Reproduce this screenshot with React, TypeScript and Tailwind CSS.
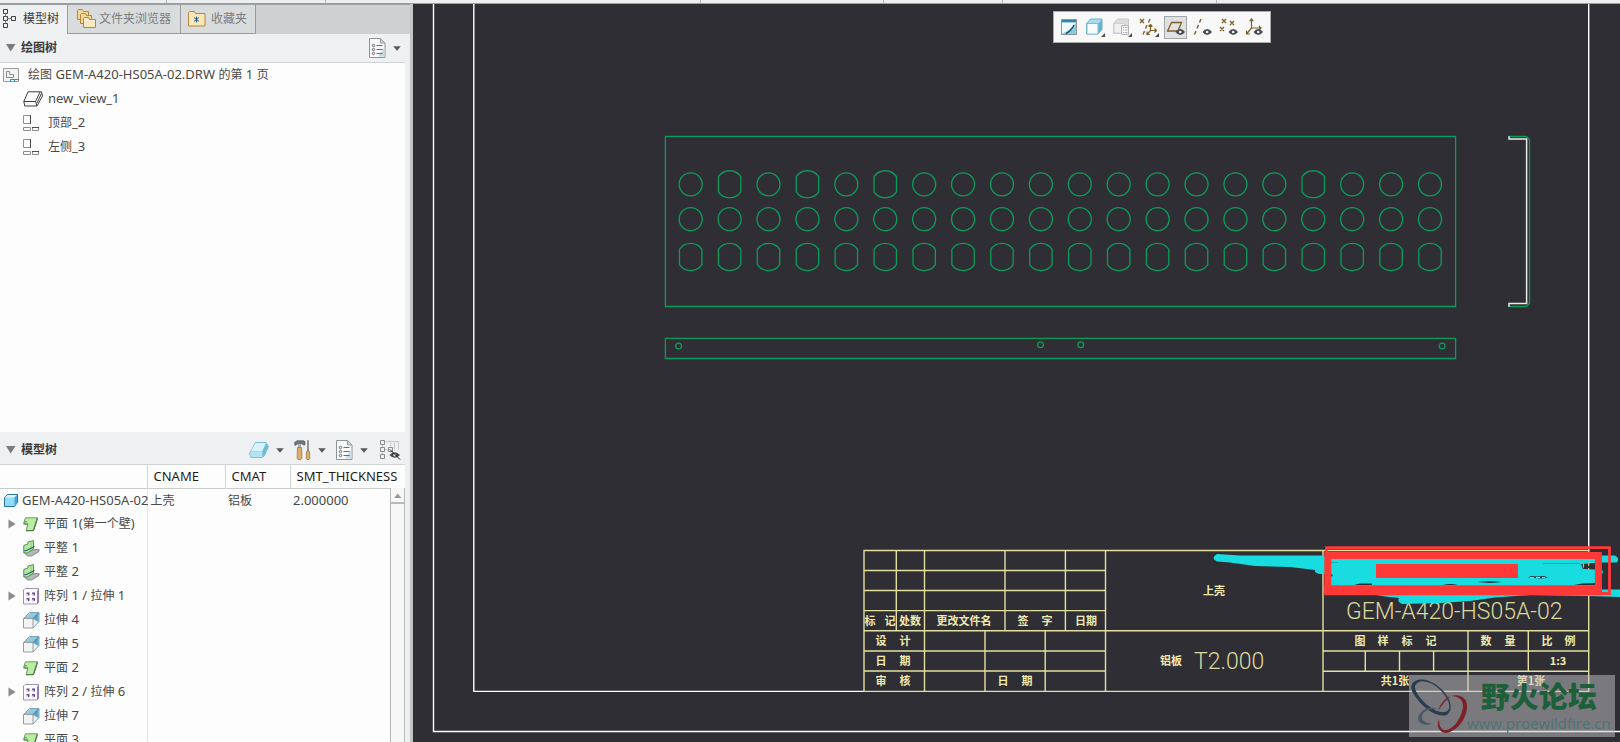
import type { ReactNode } from "react";

/* ---------- text ---------- */

/** Sets ideographs one step smaller than Latin letters and digits. */
function Label({ text }: { text: string }) {
  const runs = text.split(/([\u4e00-\u9fff]+)/).filter(Boolean);
  return (
    <>
      {runs.map((run, i) =>
        /[\u4e00-\u9fff]/.test(run) ? (
          <span key={i} className="text-[12px]">{run}</span>
        ) : (
          <span key={i}>{run}</span>
        ),
      )}
    </>
  );
}

/* ---------- icons ---------- */

function TreeIcon() {
  return (
    <svg width="16" height="20" viewBox="0 0 16 20" fill="none" stroke="#3f3f3f" aria-hidden="true">
      <path d="M.5.5h4v4h-4zM.5 7.500h4v4h-4zM.5 14.500h4v4h-4zM8.500 7.500h4v4h-4z" />
      <path d="M2.500 4.500v3M2.500 11.500v3M4.500 9.500h4" stroke="#777" />
    </svg>
  );
}

function FoldersIcon() {
  return (
    <svg width="20" height="20" viewBox="0 0 20 20" aria-hidden="true">
      <g fill="#f6d79a" stroke="#b5843c">
        <path d="M1.500 10.500V1.500l1-1h4l1 2h5v8z" />
        <path d="M4.500 14.500V5.500l1-1h4l1 2h5v8z" />
        <path d="M7.500 18.500V9.500l1-1h4l1 2h6v8z" fill="#fbe8bd" />
      </g>
      <path d="M8.500 11.500h10" stroke="#fff6de" />
    </svg>
  );
}

function FavoritesIcon() {
  return (
    <svg width="18" height="16" viewBox="0 0 18 16" aria-hidden="true">
      <path d="M.5 15V1.500l1-1h5l1 2h9.500V15z" fill="#fbe6b9" stroke="#b5843c" />
      <path d="M8.500 5.500v6M6 6.500l5 4M6 10.500l5-4" stroke="#1b5f86" />
    </svg>
  );
}

function DocListIcon() {
  return (
    <svg width="17" height="20" viewBox="0 0 17 20" aria-hidden="true">
      <path d="M.5.5h11l4.500 4.500v14.500H.5z" fill="#f7f9fa" stroke="#8f9496" />
      <path d="M9 18.500h6.500V9z" fill="#c6dbe2" />
      <path d="M11.500.5V5H16z" fill="#cfd3d5" stroke="#9a9fa1" />
      <g fill="none" stroke="#6a6a6a">
        <circle cx="4.500" cy="7.500" r="1.200" />
        <circle cx="4.500" cy="11.500" r="1.200" />
        <circle cx="4.500" cy="15.500" r="1.200" />
        <path d="M7.500 7.500h6M7.500 11.500h6M7.500 15.500h6" />
      </g>
    </svg>
  );
}

function CaretIcon() {
  return (
    <svg width="8" height="5" viewBox="0 0 8 5" aria-hidden="true">
      <path d="M.2.200h7.600L4 4.800z" fill="#585858" />
    </svg>
  );
}

function SectionArrow() {
  return (
    <svg width="10" height="8" viewBox="0 0 10 8" aria-hidden="true">
      <path d="M0 0h9.500L4.700 7.500z" fill="#7c7c7c" />
    </svg>
  );
}

function ExpandArrow() {
  return (
    <svg width="8" height="10" viewBox="0 0 8 10" aria-hidden="true">
      <path d="M.5.5v9L7.500 5z" fill="#8a8a8a" />
    </svg>
  );
}

function SheetIcon() {
  return (
    <svg width="17" height="15" viewBox="0 0 17 15" aria-hidden="true">
      <path d="M.5.5h15v13H.5z" fill="#f2f4f5" stroke="#9b9b9b" />
      <path d="M3.500 3.500h3v3h4v3h-7z" fill="none" stroke="#8b8b8b" />
      <path d="M7.500 14v-2.500h8.500M11.500 12v2" fill="none" stroke="#2f8fc4" />
    </svg>
  );
}

function View3dIcon() {
  return (
    <svg width="20" height="16" viewBox="0 0 20 16" fill="none" stroke="#3d3d3d" aria-hidden="true">
      <path d="M.8 10.500L5 .8h13.500l1 4.200-5.500 10H1.800z" strokeLinejoin="round" />
      <path d="M.8 10.500h11.700L17 1M12.500 10.500L14 15M14 12l4.500-9.500" />
    </svg>
  );
}

function ProjectionIcon() {
  return (
    <svg width="17" height="17" viewBox="0 0 17 17" fill="none" aria-hidden="true">
      <path d="M7.500.5h-7v8h7M.5 12.500h7v3h-7zM9.500 12.500v3h6v-3" stroke="#8f8f8f" />
      <path d="M7.500 0v9M9 12.500h7" stroke="#4a4a4a" />
    </svg>
  );
}

function SlabIcon() {
  return (
    <svg width="20" height="16" viewBox="0 0 20 16" aria-hidden="true">
      <path d="M6.500.5h10.500l2.500 4-4 9-2 2H2L.5 11.500z" fill="#8ed3ec" stroke="#7dbcd3" strokeLinejoin="round" />
      <path d="M6.500 1h10.500l-3.500 8H2z" fill="#d8f3fb" />
      <path d="M1.500 9.500h11.500l1 5.500H2.500L1 12z" fill="#b4e4f4" />
      <path d="M13.500 9L17 1.500l2 3-3.500 8.500-2 2z" fill="#6fbbd8" />
    </svg>
  );
}

function ToolsIcon() {
  return (
    <svg width="17" height="20" viewBox="0 0 17 20" aria-hidden="true">
      <path d="M.5 2.500L3 .7h6.500l1.500 1V5H9.500L8 3.800H4L1 5.500z" fill="#6f757a" stroke="#4b5054" strokeWidth=".6" />
      <path d="M4 4h3v4H4z" fill="#a9afb3" />
      <path d="M3.500 7.500h4l.5 11-1 1H4l-.8-1z" fill="#dbb06c" stroke="#8e6b35" strokeWidth=".7" />
      <path d="M13.500.5h1V11h-1z" fill="#6f757a" stroke="#7a8084" strokeWidth=".6" />
      <path d="M12.300 13l.7-2h2l.7 2v5.500l-.7 1h-2l-.7-1z" fill="#dbb06c" stroke="#8e6b35" strokeWidth=".7" />
    </svg>
  );
}

function HiddenTreeIcon() {
  return (
    <svg width="21" height="20" viewBox="0 0 21 20" fill="none" aria-hidden="true">
      <path d="M6 1.500h13M10.500 1.500v5M14.500 1.500v8M18.500 1.500v8M2.500 5v12M5 9.500h3" stroke="#c8c8c8" />
      <path d="M.5.5h4v4h-4zM.5 7.500h4v4h-4zM.5 14.500h4v4h-4zM8.500 7.500h4v4h-4z" fill="#eef0f1" stroke="#8a8a8a" />
      <path d="M9.500 15q5-5.500 10.500 0-5.500 5.500-10.500 0z" fill="#444" />
      <circle cx="14.700" cy="15" r="1.500" fill="#ddd" />
      <path d="M10 9.500l10 10" stroke="#111" />
    </svg>
  );
}

function PartIcon() {
  return (
    <svg width="14" height="13" viewBox="0 0 14 13" aria-hidden="true">
      <path d="M.5 3.500l3-3h10v8l-3 4H.5z" fill="#8fdcf7" stroke="#257a9d" strokeLinejoin="round" />
      <path d="M1 3.500l2.500-2.500H13l-2.500 2.500z" fill="#d9f5fd" />
      <path d="M10.500 3.500l2.500-2.500v7.500l-2.500 3z" fill="#47a8cf" />
    </svg>
  );
}

function PlaneWallIcon() {
  return (
    <svg width="16" height="15" viewBox="0 0 16 15" aria-hidden="true">
      <path d="M2.500.8h12L10.500 13.500H3l2-6.500H.8V5.300L4 4.500H1z" fill="#b9ef9f" stroke="#6f9b64" strokeLinejoin="round" />
      <path d="M14.500 1L11 12l-1 1.700H3" stroke="#547a50" strokeWidth="1.300" fill="none" />
      <path d="M.8 7h4" stroke="#547a50" />
    </svg>
  );
}

function FlatWallIcon() {
  return (
    <svg width="17" height="17" viewBox="0 0 17 17" aria-hidden="true">
      <path d="M1 12.500l3.500 3.500h4L16 11.500V9.500h-4L4 12z" fill="#b4b9b7" stroke="#858a88" strokeLinejoin="round" />
      <path d="M.8 12.800V5.500L5 3.800V2L10.500.6v8.200L4.500 13z" fill="#b7e9a1" stroke="#568f52" strokeLinejoin="round" />
      <path d="M8 1.500v7.500" stroke="#8cc97a" />
      <path d="M1.500 10.800l3-.8 7-3.500" stroke="#1f5f78" strokeWidth="1.200" fill="none" />
    </svg>
  );
}

function PatternIcon() {
  return (
    <svg width="16" height="17" viewBox="0 0 16 17" aria-hidden="true">
      <path d="M.5 2L2 .5h13.500v14L14 16H.5z" fill="#fdfdfe" stroke="#9f93b0" />
      <path d="M14 2.500L15.500 1v13.500L14 16z" fill="#8f78b5" />
      <path d="M3.500 4.500h3v3h-3zM9 4.500h3v3H9zM3.500 10h3v3h-3zM9 10h3v3H9z" fill="#6b4c9d" />
      <path d="M3 6h2v2H3zM8.500 6h2v2h-2zM3 11.500h2v2H3zM8.500 11.500h2v2h-2z" fill="#e4dcf0" />
    </svg>
  );
}

function ExtrudeIcon() {
  return (
    <svg width="17" height="17" viewBox="0 0 17 17" aria-hidden="true">
      <path d="M.5 6.500l6-6H16v9l-6 6.500z" fill="#e9f3f7" stroke="#7fa3b2" strokeLinejoin="round" />
      <path d="M1.500 6L7 1h8.500L10 6z" fill="#8fc9df" />
      <path d="M10 6l5.500-5v9L10 7z" fill="#5ba7c6" />
      <path d="M.5 6.500H10V16H.5z" fill="#f3f3f3" stroke="#9c9c9c" />
      <path d="M10 6.500L15.500 1" stroke="#3f7f9c" />
    </svg>
  );
}

/* ---------- view toolbar icons ---------- */

function Eye() {
  return (
    <g>
      <path d="M11.500 16q4.800-6 9.500 0-4.700 6-9.500 0z" fill="#444a4d" />
      <circle cx="16.200" cy="16" r="1.300" fill="#f1f1f1" />
    </g>
  );
}

function IconFrame({ children }: { children: ReactNode }) {
  return (
    <svg width="23" height="23" viewBox="0 0 23 23" fill="none" aria-hidden="true">
      {children}
    </svg>
  );
}

const corner = <path d="M22 17v4h-4z" fill="#4d4d4d" />;

const viewTools: { name: string; active?: boolean; icon: ReactNode }[] = [
  {
    name: "重画",
    icon: (
      <IconFrame>
        <path d="M5.500 3.500h15v15h-15z" fill="#8ecbe0" stroke="#8b9498" />
        <path d="M6 4h14v2.500H6z" fill="#2e86ab" />
        <path d="M6 6.500h14l-3 4-7 5.500-4 1.500z" fill="#eefafd" />
        <path d="M10 17.500q5-2.500 8-8.500" stroke="#164e68" strokeWidth="1.400" />
      </IconFrame>
    ),
  },
  {
    name: "显示样式",
    icon: (
      <IconFrame>
        <path d="M3.500 7.500l4-4.500h11.500v10.500l-4 4.500H3.500z" fill="#a9dcef" stroke="#6db4cf" />
        <path d="M4 7.500h11v10.500H4z" fill="#f8fcfe" stroke="#7fbdd4" />
        <path d="M15.500 7.500l3.500-4v10l-3.500 4z" fill="#62b3d2" />
        {corner}
      </IconFrame>
    ),
  },
  {
    name: "已保存方向",
    icon: (
      <IconFrame>
        <path d="M3.500 7.500l4-4.500h11v10l-4 4.500h-11z" fill="#dedede" stroke="#c8c8c8" />
        <path d="M4 7.500h10.500V17H4z" fill="#f0f0f0" stroke="#d0d0d0" />
        <path d="M11.500 9.500h7v9h-7z" fill="#fafafa" stroke="#b4b4b4" />
        <path d="M13 11.500h1m1 0h2.500M13 14h1m1 0h2.500M13 16.500h1m1 0h2.500" stroke="#a8a8a8" />
        {corner}
      </IconFrame>
    ),
  },
  {
    name: "基准显示过滤器",
    icon: (
      <IconFrame>
        <g stroke="#7d6029" strokeWidth="1.400">
          <path d="M3 3l4 4M7 3L3 7" />
          <path d="M13 3l-1.500 3.500M10 9l-1.500 3.500M7.500 15L6 18.500" />
          <path d="M13.500 8.500v6h6M13.500 14.500l-3.500 4M11.500 10.500l2-2 2 2M17.500 12.500l2 2-2 2M10 15.500v3h3" strokeWidth="1.200" />
        </g>
        {corner}
      </IconFrame>
    ),
  },
  {
    name: "平面显示",
    active: true,
    icon: (
      <IconFrame>
        <path d="M3.500 15L7.500 6.500H17.500L14 15z" stroke="#7d6029" strokeWidth="1.300" />
        <Eye />
      </IconFrame>
    ),
  },
  {
    name: "轴显示",
    icon: (
      <IconFrame>
        <path d="M10 3L8.500 6.500M7.500 9L6 12.500M5 15l-1.500 3.500" stroke="#7d6029" strokeWidth="1.500" />
        <Eye />
      </IconFrame>
    ),
  },
  {
    name: "点显示",
    icon: (
      <IconFrame>
        <path d="M4 3l4 4M8 3L4 7M12 5l4 4M16 5l-4 4M2 11l4 4M6 11l-4 4" stroke="#7d6029" strokeWidth="1.400" />
        <g transform="translate(-1 0)"><Eye /></g>
      </IconFrame>
    ),
  },
  {
    name: "坐标系显示",
    icon: (
      <IconFrame>
        <path d="M6.500 3v9h9.500M6.500 12L1.500 18M4.800 5l1.700-2 1.700 2M14 10l2 2-2 2M1.500 14.500V18H5" stroke="#7d6029" strokeWidth="1.200" />
        <g transform="translate(-3 0)"><Eye /></g>
      </IconFrame>
    ),
  },
];

/* ---------- side panel ---------- */

const drawingViews = [
  { name: "new_view_1", icon: <View3dIcon /> },
  { name: "顶部_2", icon: <ProjectionIcon /> },
  { name: "左侧_3", icon: <ProjectionIcon /> },
];

const features = [
  { name: "平面 1(第一个壁)", icon: <PlaneWallIcon />, group: true },
  { name: "平整 1", icon: <FlatWallIcon />, group: false },
  { name: "平整 2", icon: <FlatWallIcon />, group: false },
  { name: "阵列 1 / 拉伸 1", icon: <PatternIcon />, group: true },
  { name: "拉伸 4", icon: <ExtrudeIcon />, group: false },
  { name: "拉伸 5", icon: <ExtrudeIcon />, group: false },
  { name: "平面 2", icon: <PlaneWallIcon />, group: false },
  { name: "阵列 2 / 拉伸 6", icon: <PatternIcon />, group: true },
  { name: "拉伸 7", icon: <ExtrudeIcon />, group: false },
  { name: "平面 3", icon: <PlaneWallIcon />, group: false },
];

function MenuButton({ name, children }: { name: string; children: ReactNode }) {
  return (
    <button type="button" aria-label={name} className="flex h-6 items-center gap-[7px]">
      {children}
      <CaretIcon />
    </button>
  );
}

function SidePanel() {
  return (
    <aside className="flex w-[413px] shrink-0 flex-col border-r-3 border-[#c3c4c6] bg-[#eef0f1] font-['Noto_Sans','Noto_Sans_CJK_SC',sans-serif] text-[13px] text-[#484848]">
      <div role="tablist" className="flex h-[30px] shrink-0 border-t border-[#9d9d9f] bg-[#cfd0d1] text-[12px]">
        <button type="button" role="tab" aria-selected="true" className="flex w-[67px] items-center gap-1 bg-[#eef0f1] pb-[2px] pl-[3px] text-[#3c3c3c]">
          <TreeIcon />
          模型树
        </button>
        <button type="button" role="tab" aria-selected="false" className="flex w-[113px] items-center gap-[3px] border-b border-l border-[#9a9c9e] bg-[#d9dcdd] pl-2 text-[#7d7d7d]">
          <FoldersIcon />
          文件夹浏览器
        </button>
        <button type="button" role="tab" aria-selected="false" className="flex w-[76px] items-center gap-[5px] border-x border-b border-[#9a9c9e] bg-[#d9dcdd] pl-[7px] text-[#7d7d7d]">
          <FavoritesIcon />
          收藏夹
        </button>
      </div>

      <section className="mr-[5px] flex h-[398px] shrink-0 flex-col">
        <header className="flex h-[29px] items-center gap-[5px] border-b border-[#cfd3d4] pr-1 pl-[6px]">
          <SectionArrow />
          <h2 className="text-[12px] font-bold text-[#3a3a3a]">绘图树</h2>
          <div className="ml-auto">
            <MenuButton name="绘图树设置"><DocListIcon /></MenuButton>
          </div>
        </header>
        <ul className="flex-1 bg-[#fdfdfd]">
          <li>
            <div className="flex h-6 items-center gap-2 pl-[3px]">
              <SheetIcon />
              <span><Label text="绘图 GEM-A420-HS05A-02.DRW 的第 1 页" /></span>
            </div>
            <ul>
              {drawingViews.map((view) => (
                <li key={view.name} className="flex h-6 items-center pl-[23px]">
                  <span className="w-[25px]">{view.icon}</span>
                  <span><Label text={view.name} /></span>
                </li>
              ))}
            </ul>
          </li>
        </ul>
      </section>

      <section className="mr-[5px] flex min-h-0 flex-1 flex-col">
        <header className="flex h-[33px] shrink-0 items-center gap-[5px] border-b border-[#cfd3d4] pt-[4px] pr-1 pl-[6px]">
          <SectionArrow />
          <h2 className="text-[12px] font-bold text-[#3a3a3a]">模型树</h2>
          <div className="ml-auto flex items-center gap-[10px]">
            <MenuButton name="显示"><SlabIcon /></MenuButton>
            <MenuButton name="设置"><ToolsIcon /></MenuButton>
            <MenuButton name="列"><DocListIcon /></MenuButton>
            <button type="button" aria-label="隐藏项" className="flex h-6 items-center pl-[2px]"><HiddenTreeIcon /></button>
          </div>
        </header>
        <div className="relative min-h-0 flex-1 overflow-hidden bg-[#fdfdfd]">
          <table className="w-full table-fixed border-collapse">
            <colgroup>
              <col className="w-[147px]" />
              <col className="w-[78px]" />
              <col className="w-[65px]" />
              <col />
            </colgroup>
            <thead>
              <tr className="h-[23px] border-b border-[#c9cccd] text-left text-[#1e1e1e]">
                <th aria-label="名称" className="border-r border-[#cfd3d4] p-0" />
                <th className="border-r border-[#cfd3d4] p-0 pl-[6px] font-normal">CNAME</th>
                <th className="border-r border-[#cfd3d4] p-0 pl-[6px] font-normal">CMAT</th>
                <th className="p-0 pl-[6px] font-normal">SMT_THICKNESS</th>
              </tr>
            </thead>
            <tbody>
              <tr className="h-6">
                <td className="border-r border-[#e6e6e6] p-0">
                  <div className="flex items-center gap-1 pl-1">
                    <span className="shrink-0"><PartIcon /></span>
                    <span className="whitespace-nowrap">GEM-A420-HS05A-02</span>
                  </div>
                </td>
                <td className="p-0 pl-[3px]"><Label text="上壳" /></td>
                <td className="p-0 pl-[3px]"><Label text="铝板" /></td>
                <td className="p-0 pl-[3px]">2.000000</td>
              </tr>
              {features.map((feature) => (
                <tr key={feature.name} className="h-6">
                  <td className="border-r border-[#e6e6e6] p-0">
                    <div className="flex items-center pl-2">
                      <span className="w-[15px]">{feature.group && <ExpandArrow />}</span>
                      <span className="w-[21px]">{feature.icon}</span>
                      <span className="whitespace-nowrap"><Label text={feature.name} /></span>
                    </div>
                  </td>
                  <td className="p-0" />
                  <td className="p-0" />
                  <td className="p-0" />
                </tr>
              ))}
            </tbody>
          </table>
          <div className="absolute top-[23px] right-0 bottom-0 flex w-[15px] flex-col border-x border-[#b9b9b9] bg-[#f7f7f7]">
            <button type="button" aria-label="向上滚动" className="flex h-4 items-center justify-center border-b-2 border-[#b9b9b9]">
              <svg width="8" height="5" viewBox="0 0 8 5" aria-hidden="true"><path d="M0 5h7.500L3.700.5z" fill="#9a9a9a" /></svg>
            </button>
          </div>
        </div>
      </section>
    </aside>
  );
}

/* ---------- drawing sheet ---------- */

const COLUMNS = 20;
const slotColumns = [1, 3, 5, 16];
const holeX = (i: number) => 690.7 + i * 38.91;

function Hole({ x, y }: { x: number; y: number }) {
  return <circle cx={x} cy={y} r="11.5" />;
}

function Slot({ x, y }: { x: number; y: number }) {
  return <path d={`M${x - 11.2} ${y - 7.6}A13.5 13.5 0 0 1 ${x + 11.2} ${y - 7.6}V${y + 7.6}A13.5 13.5 0 0 1 ${x - 11.2} ${y + 7.6}Z`} />;
}

const blockLabels: [string, number, number][] = [
  ["标", 870, 621], ["记", 890, 621], ["处数", 910, 621], ["更改文件名", 964, 621],
  ["签", 1023, 621], ["字", 1047, 621], ["日期", 1086, 621],
  ["设", 881, 641], ["计", 905, 641],
  ["日", 881, 661], ["期", 905, 661],
  ["审", 881, 681], ["核", 905, 681], ["日", 1003, 681], ["期", 1027, 681],
  ["上壳", 1214, 591], ["铝板", 1171, 661],
  ["图", 1360, 641], ["样", 1383, 641], ["标", 1407, 641], ["记", 1431, 641],
  ["数", 1486, 641], ["量", 1510, 641], ["比", 1547, 641], ["例", 1570, 641],
  ["1:3", 1558, 661], ["共1张", 1395, 681], ["第1张", 1531, 681],
];

function Sheet() {
  const cols = Array.from({ length: COLUMNS }, (_, i) => i);
  return (
    <svg className="block h-full w-full" viewBox="413 4 1207 738" preserveAspectRatio="xMinYMin slice" fill="none" role="img" aria-label="GEM-A420-HS05A-02">
      <path d="M433.500 4V731.500H1620M473.800 4V691.400H864M1588.700 4V551" stroke="#ffffff" strokeWidth="1.400" />

      <g stroke="#0c9c5a" strokeWidth="1.300">
        <path d="M665.400 136.500H1455.600V306.500H665.400zM665.400 338.300H1455.600V358.500H665.400z" />
        {cols.map((i) => (
          <g key={i}>
            {slotColumns.includes(i) ? <Slot x={holeX(i)} y={184.3} /> : <Hole x={holeX(i)} y={184.3} />}
            <Hole x={holeX(i)} y={219.2} />
            <Slot x={holeX(i)} y={257} />
          </g>
        ))}
        <circle cx="678.600" cy="346" r="2.900" />
        <circle cx="1040.500" cy="344.700" r="2.900" />
        <circle cx="1080.700" cy="344.700" r="2.900" />
        <circle cx="1442.200" cy="346" r="2.900" />
        <path d="M1508.500 136.500H1526.500L1529.500 139.500V303.500L1526.500 306.500H1508.500" />
      </g>
      <path d="M1509 136.200V139H1526.600V303.600H1509V306.800" stroke="#f0eaea" strokeWidth="1.500" />

      <g stroke="#e3dfa0" strokeWidth="1.400">
        <path d="M864 550.500H1588.700V691.400H864z" />
        <path d="M864 570.500H1105.500M864 590.500H1105.500M864 610.600H1105.500M864 630.700H1588.700M864 651H1105.500M864 671H1105.500" />
        <path d="M896.300 550.500V630.700M924.500 550.500V691.400M1005 550.500V630.700M1065.400 550.500V630.700M1105.500 550.500V691.400M985 630.700V691.400M1045.200 630.700V691.400M1323 550.500V691.400" />
        <path d="M1323 651H1588.700M1323 671.200H1588.700M1468 630.700V691.400M1528.300 630.700V671.200M1365.300 651V671.200M1399.500 651V671.200M1433.600 651V671.200" />
      </g>

      <g fill="#efeab0" textAnchor="middle" className="font-['Noto_Sans_CJK_SC',sans-serif] text-[11px] font-bold">
        {blockLabels.map(([text, x, y]) => (
          <text key={`${text}-${x}-${y}`} x={x} y={y + 4}>{text}</text>
        ))}
      </g>
      <g fill="#ddd99c" className="font-[Roboto,sans-serif] text-[23px] font-light">
        <text x="1194" y="669">T2.000</text>
        <text x="1346" y="619">GEM-A420-HS05A-02</text>
      </g>

      {/* marker strokes over the company name */}
      <g fill="#18dcdf">
        <path d="M1217 554L1240 555.500H1331V574H1320Q1314 573 1315 570L1290 567 1255 566 1230 562.500 1217 561.500Q1210 558 1217 554z" />
        <path d="M1331 557H1595V587H1331z" />
        <path d="M1600 555.500H1615Q1620 558 1617 562.500H1600z" />
        <path d="M1600 568.500Q1606 572 1600 575.500z" />
        <path d="M1371 594H1540L1600 589.500H1620V597L1588 596 1530 595 1495 597.500 1470 601 1440 603 1402 604Q1397 602 1399 598L1385 596.500z" />
      </g>
      <g fill="#2f2e34">
        <path d="M1581 564L1595 563V569.500L1583 569z" />
        <path d="M1477 582Q1490 580.500 1502 582L1490 583zM1528 577.500l3-1.500 6 .5 7-.5 4 1.500-6 1zM1443 585Q1450 583 1458 585zM1354 585L1360 583.500H1372V585zM1574 585L1582 583.500 1595 583V585zM1331 574L1333 575 1331 577z" />
      </g>
      <path d="M1543 563.500H1580M1331 562.500H1338" stroke="#1a9da2" strokeWidth=".8" />
      <path d="M1583.500 563.500V569M1588.700 562V570M1530 577.500H1545" stroke="#c9c58e" strokeWidth="1.100" strokeDasharray="4 2" />
      <g stroke="#ff3838">
        <path d="M1326.500 547.700H1609.500V593.500H1326.500z" strokeWidth="2.800" />
        <path d="M1327.800 555.500H1598.400V590H1327.800z" strokeWidth="7" />
        <path d="M1324.300 590.200H1602" strokeWidth="10" />
      </g>
      <path d="M1376 564H1518V578H1376z" fill="#ff3838" />
    </svg>
  );
}

function ViewToolbar() {
  return (
    <div role="toolbar" aria-label="视图" className="absolute top-[7px] left-[640px] flex h-8 items-center border border-[#ababab] bg-[#f8f8f8]">
      {viewTools.map((tool) => (
        <button
          key={tool.name}
          type="button"
          aria-label={tool.name}
          aria-pressed={tool.active ?? false}
          className={
            tool.active
              ? "mx-[2px] flex size-[23px] items-center justify-center bg-[#dfe1e3] outline outline-[#a3a5a7] -outline-offset-1"
              : "flex h-6 w-[27px] items-center justify-center"
          }
        >
          {tool.icon}
        </button>
      ))}
    </div>
  );
}

function Watermark() {
  return (
    <div className="absolute right-[5px] bottom-[5px] flex h-[62px] w-[206px] items-center bg-[#c5c5c8]/50">
      <svg className="shrink-0" width="58" height="62" viewBox="0 0 58 62" aria-hidden="true">
        <g fillRule="evenodd">
          <path d="M3 9C7 2 20 3 30 12C41 21 45 33 39 39C32 44 17 36 9 25C3 18 1 13 3 9zM6 11C5 15 11 25 21 32C29 38 37 39 40 34C42 28 36 19 28 12C19 5 9 4 6 11z" fill="#2b3b50" />
          <path d="M42 21C52 18 59 24 58 33C57 45 47 57 37 58C30 58 27 51 30 44C30 52 33 56 38 55C46 53 53 41 54 32C54 25 50 21 42 21z" fill="#7c2228" />
          <path d="M42 21C36 23 31 29 29 36C32 31 37 25 42 21z" fill="#7c2228" />
          <path d="M29 34C20 30 10 36 9 43C9 49 16 51 23 49C17 48 13 46 13 42C13 37 20 33 29 34z" fill="#4b5866" />
        </g>
      </svg>
      <div className="flex flex-col items-center pb-[3px] whitespace-nowrap">
        <span className="font-['Noto_Sans_CJK_SC',sans-serif] text-[29px] leading-[36px] font-black text-[#1d5e3b]">野火论坛</span>
        <span className="font-['Open_Sans',sans-serif] text-[15px] leading-[20px] text-[#4d7274]">www.proewildfire.cn</span>
      </div>
    </div>
  );
}

/* ---------- page ---------- */

function RibbonEdge() {
  return (
    <div className="flex h-1 shrink-0 border-b border-[#9d9d9f] bg-[#eceef0]">
      <div className="w-[167px] border-r border-[#b5b7b9]" />
      <div className="w-[159px] border-r border-[#b5b7b9]" />
      <div className="w-[375px] border-r border-[#b5b7b9]" />
      <div className="w-[183px] border-r border-[#b5b7b9]" />
      <div className="w-[119px] border-r border-[#b5b7b9]" />
      <div className="w-[214px] border-r border-[#b5b7b9]" />
    </div>
  );
}

export default function App() {
  return (
    <div className="flex h-screen flex-col overflow-hidden bg-[#2f2e34]">
      <RibbonEdge />
      <div className="flex min-h-0 flex-1">
        <SidePanel />
        <main className="relative min-w-0 flex-1 overflow-hidden bg-[#2f2e34]">
          <Sheet />
          <ViewToolbar />
          <Watermark />
        </main>
      </div>
    </div>
  );
}
